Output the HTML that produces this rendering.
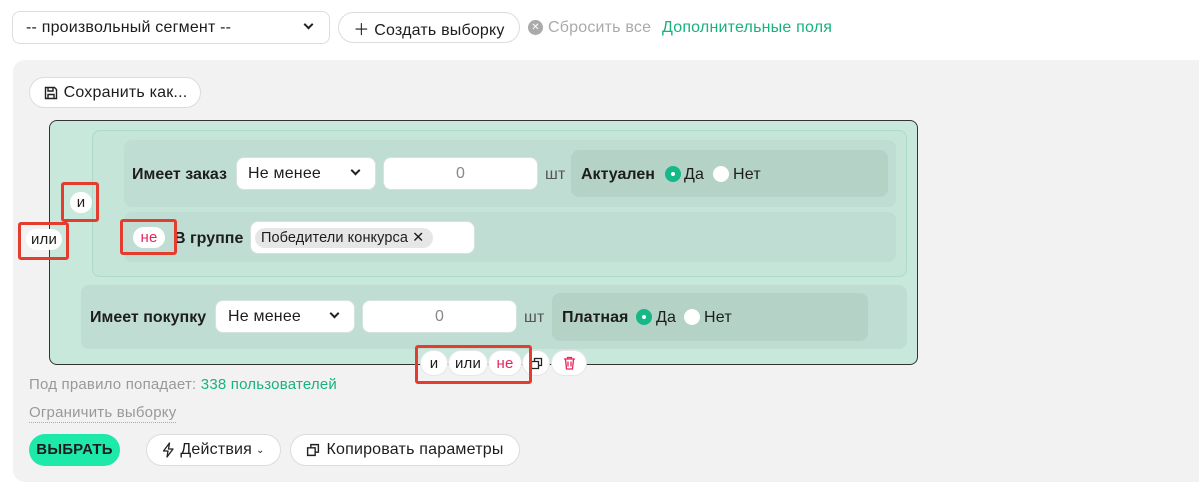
<!DOCTYPE html>
<html><head><meta charset="utf-8"><style>
*{box-sizing:border-box;margin:0;padding:0}
body{width:1199px;height:501px;background:#fff;font-family:"Liberation Sans","DejaVu Sans",sans-serif;font-size:16px;letter-spacing:0.2px;color:#1d1d1d;position:relative;overflow:hidden}
.a{position:absolute;line-height:18px}
.pill{position:absolute;background:#fff;border:1px solid #dcdcdc;border-radius:16px;display:flex;align-items:center;justify-content:center}
.inp{position:absolute;background:#fff;border:1px solid #d5e3dd;border-radius:8px;display:flex;align-items:center}
.lbl{position:absolute;font-weight:bold;font-size:16px;letter-spacing:0;line-height:18px}
.chev{position:absolute;width:7px;height:7px;border-right:2px solid #222;border-bottom:2px solid #222;transform:rotate(45deg)}
.red{position:absolute;border:3px solid #e43d30;border-radius:3px}
.op{position:absolute;background:#fff;border-radius:12px;display:flex;align-items:center;justify-content:center;font-size:15px;box-shadow:0 0 0 1px #e6e6e6}
.radio{position:absolute;width:16px;height:16px;border-radius:50%;background:#fff}
.rsel{background:#15b886}
.rsel:after{content:"";position:absolute;left:6px;top:6px;width:4px;height:4px;border-radius:50%;background:#fff}
</style></head><body>
<div class="inp" style="left:12px;top:11px;width:318px;height:33px;border-color:#ddd;padding-left:13px">-- произвольный сегмент --</div>
<div class="chev" style="left:305px;top:21px"></div>
<div class="pill" style="left:338px;top:12px;width:182px;height:31px">＋ Создать выборку</div>
<div class="a" style="left:528px;top:20px;width:15px;height:15px;border-radius:50%;background:#aaa;color:#fff;font-size:10px;text-align:center;line-height:15px">✕</div>
<div class="a" style="left:548px;top:19px;color:#aaa">Сбросить все</div>
<div class="a" style="left:662px;top:19px;color:#17b27f">Дополнительные поля</div>

<div class="a" style="left:13px;top:60px;width:1200px;height:422px;background:#f2f2f2;border-radius:12px"></div>
<div class="pill" style="left:29px;top:77px;width:172px;height:31px">
<svg width="16" height="16" viewBox="0 0 16 16" style="margin-right:5px"><path d="M2.5 2.5h9l2 2v9h-11z M5 2.5v3.5h5V2.5 M5 13.5v-4h6v4" fill="none" stroke="#222" stroke-width="1.4"/></svg>Сохранить как...</div>

<div class="a" style="left:49px;top:120px;width:869px;height:245px;background:#c8e8dc;border:1px solid #333;border-radius:8px"></div>
<div class="a" style="left:92px;top:130px;width:815px;height:147px;border:1px solid #addbc9;border-radius:8px;background:#c6e5d9"></div>
<div class="a" style="left:124px;top:140px;width:772px;height:67px;background:#bfddd2;border-radius:8px"></div>
<div class="lbl" style="left:132px;top:166px">Имеет заказ</div>
<div class="inp" style="left:236px;top:157px;width:140px;height:33px;padding-left:11px">Не менее</div>
<div class="chev" style="left:352px;top:167px"></div>
<div class="inp" style="left:383px;top:157px;width:155px;height:33px;justify-content:center;color:#888">0</div>
<div class="a" style="left:545px;top:166px;color:#555">шт</div>
<div class="a" style="left:571px;top:150px;width:317px;height:47px;background:#b4d2c6;border-radius:8px"></div>
<div class="lbl" style="left:581px;top:166px">Актуален</div>
<div class="radio rsel" style="left:665px;top:166px"></div>
<div class="a" style="left:684px;top:166px">Да</div>
<div class="radio" style="left:713px;top:166px"></div>
<div class="a" style="left:733px;top:166px">Нет</div>

<div class="a" style="left:124px;top:212px;width:772px;height:50px;background:#bfddd2;border-radius:8px"></div>
<div class="op" style="left:133px;top:227px;width:32px;height:21px;color:#e8255a;box-shadow:none">не</div>
<div class="lbl" style="left:174px;top:230px">В группе</div>
<div class="inp" style="left:250px;top:221px;width:225px;height:33px"></div>
<div class="a" style="left:255px;top:228px;width:178px;height:20px;background:#e6e6e6;border-radius:10px;font-size:14.5px;letter-spacing:0.1px;padding-left:6px;line-height:20px">Победители конкурса ✕</div>

<div class="a" style="left:81px;top:285px;width:826px;height:64px;background:#bfddd2;border-radius:8px"></div>
<div class="lbl" style="left:90px;top:309px">Имеет покупку</div>
<div class="inp" style="left:215px;top:300px;width:140px;height:33px;padding-left:12px">Не менее</div>
<div class="chev" style="left:331px;top:310px"></div>
<div class="inp" style="left:362px;top:300px;width:155px;height:33px;justify-content:center;color:#888">0</div>
<div class="a" style="left:524px;top:309px;color:#555">шт</div>
<div class="a" style="left:552px;top:293px;width:316px;height:48px;background:#b4d2c6;border-radius:8px"></div>
<div class="lbl" style="left:562px;top:309px">Платная</div>
<div class="radio rsel" style="left:636px;top:309px"></div>
<div class="a" style="left:656px;top:309px">Да</div>
<div class="radio" style="left:684px;top:309px"></div>
<div class="a" style="left:704px;top:309px">Нет</div>

<div class="op" style="left:70px;top:192px;width:22px;height:21px;box-shadow:none">и</div>
<div class="op" style="left:26px;top:229px;width:36px;height:21px;box-shadow:none">или</div>
<div class="red" style="left:61px;top:182px;width:38px;height:40px"></div>
<div class="red" style="left:18px;top:222px;width:51px;height:38px"></div>
<div class="red" style="left:120px;top:219px;width:57px;height:36px"></div>

<div class="op" style="left:421px;top:351px;width:26px;height:24px">и</div>
<div class="op" style="left:449px;top:351px;width:38px;height:24px">или</div>
<div class="op" style="left:489px;top:351px;width:32px;height:24px;color:#e8255a">не</div>
<div class="op" style="left:523px;top:351px;width:26px;height:24px"><svg width="13" height="13" viewBox="0 0 13 13"><path d="M1.5 4.5h7v7h-7z M4.5 4.5v-3h7v7h-3" fill="none" stroke="#222" stroke-width="1.3"/></svg></div>
<div class="op" style="left:552px;top:351px;width:34px;height:24px"><svg width="13" height="14" viewBox="0 0 13 14"><path d="M1 3h11 M4.5 3V1.5h4V3 M2.5 3l1 10h6l1-10 M5 5.5v5 M8 5.5v5" fill="none" stroke="#e8255a" stroke-width="1.3"/></svg></div>
<div class="red" style="left:415px;top:345px;width:117px;height:39px"></div>

<div class="a" style="left:29px;top:376px;color:#999;font-size:15px">Под правило попадает: <span style="color:#17b27f">338 пользователей</span></div>
<div class="a" style="left:29px;top:404px;color:#999;font-size:15px;border-bottom:1px dotted #aaa;line-height:18px">Ограничить выборку</div>
<div class="a" style="left:29px;top:434px;width:91px;height:32px;border-radius:16px;background:#1de9a8;font-weight:bold;display:flex;align-items:center;justify-content:center;font-size:15px">ВЫБРАТЬ</div>
<div class="pill" style="left:146px;top:434px;width:135px;height:32px"><svg width="12" height="16" viewBox="0 0 12 16" style="margin-right:6px"><path d="M7.5 1L1.5 9h4.5l-1 6 6-8H6.5z" fill="none" stroke="#222" stroke-width="1.3" stroke-linejoin="round"/></svg>Действия<span style="font-size:10px;margin-left:4px">⌄</span></div>
<div class="pill" style="left:290px;top:434px;width:230px;height:32px"><svg width="14" height="14" viewBox="0 0 13 13" style="margin-right:6px"><path d="M1.5 4.5h7v7h-7z M4.5 4.5v-3h7v7h-3" fill="none" stroke="#222" stroke-width="1.3"/></svg>Копировать параметры</div>
</body></html>
